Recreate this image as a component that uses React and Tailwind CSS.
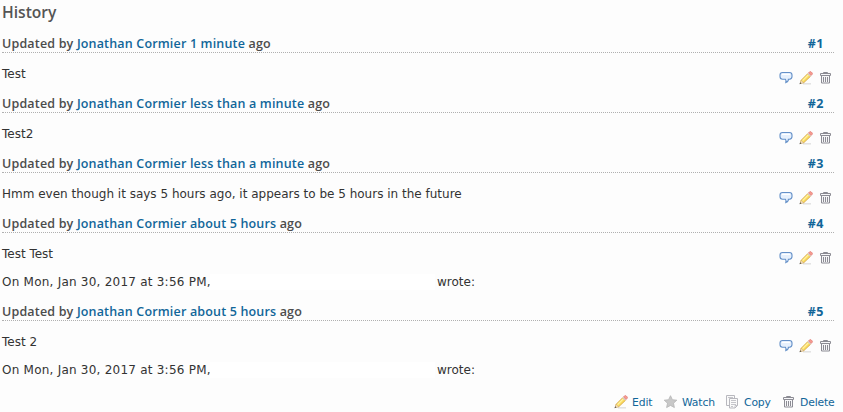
const link = "text-[#116699]";

function BubbleIcon() {
  return (
    <svg width="16" height="16" viewBox="0 0 16 16" fill="none">
      <path d="M4.500 2.500h7c1.800 0 2.500 1.100 2.500 2.500v1.500c0 1.500-.9 2.500-2.500 2.700h-1.100c.1 1.500-.9 2.700-2.600 3.400.4-1.200.2-2.500-.5-3.400H4.500C2.700 9.200 2 8 2 6.500V5c0-1.400.9-2.500 2.500-2.500z" fill="#e6f0fd" stroke="#6490c8" strokeWidth="1.100" />
      <path d="M4 4.500h8" stroke="#fff" />
    </svg>
  );
}

function PencilIcon() {
  return (
    <svg width="16" height="16" viewBox="0 0 16 16" fill="none">
      <path d="M5 13.800h8" stroke="#e2e2e2" strokeWidth="1.500" />
      <path d="M2.300 13.400l.9-3.200 6.500-6.500 2.700 2.700-6.500 6.200z" fill="#fbdc60" stroke="#d2a03c" strokeWidth=".8" />
      <path d="M4.600 10.600l5.700-5.700" stroke="#fff4a8" strokeWidth="1.200" />
      <path d="M3 10.400l2.500 2.300-3.100.8z" fill="#f5e4c8" stroke="#c9a67a" strokeWidth=".4" />
      <path d="M1.500 14.200l.6-1.900 1.300 1.300z" fill="#555" />
      <path d="M9.500 3.800l2.700 2.700.9-.9L10.400 3z" fill="#d5d5dc" />
      <path d="M10.500 2.900l1-1c.6-.5 1.300-.4 1.800.1l.8.800c.5.500.5 1.200 0 1.700l-.9 1z" fill="#f59a90" stroke="#dc6e68" strokeWidth=".6" />
    </svg>
  );
}

function TrashIcon() {
  return (
    <svg width="16" height="16" viewBox="0 0 16 16" fill="none" stroke="#8c8c94">
      <path d="M5.500 3.500v-1h4v1M2.500 3.500h10v2h-10zM3.500 5.500v7.500h8V5.500" fill="#f7f7f9" />
      <path d="M5.500 7v5M7.500 7v5M9.500 7v5" />
    </svg>
  );
}

function StarIcon() {
  return (
    <svg width="16" height="16" viewBox="0 0 16 16">
      <path d="M7.500 1.700l1.900 4 4.400.5-3.300 3 .9 4.400-3.900-2.200-3.900 2.200.9-4.400-3.300-3 4.400-.5z" fill="#c8c8c8" stroke="#b5b5b5" strokeWidth=".8" strokeLinejoin="round" />
    </svg>
  );
}

function CopyIcon() {
  return (
    <svg width="16" height="16" viewBox="0 0 16 16" fill="#fafafa" stroke="#b8b8be">
      <path d="M1.500 1.500h8v10h-8z" />
      <path d="M4.500 4.500h8v7l-2.500 2.500h-5.500z" />
      <path d="M6 6.500h5M6 8.500h5M6 10.500h5M6 12.500h2M3 3.500h5M10 14v-2.500h2.500" fill="none" strokeWidth=".8" />
    </svg>
  );
}

const entries = [
  { when: "1 minute", text: "Test" },
  { when: "less than a minute", text: "Test2" },
  { when: "less than a minute", text: "Hmm even though it says 5 hours ago, it appears to be 5 hours in the future" },
  { when: "about 5 hours", text: "Test Test", quote: true },
  { when: "about 5 hours", text: "Test 2", quote: true },
];

function Entry({ entry, number }) {
  return (
    <article className={entry.quote ? "h-[88px]" : "h-[60px]"}>
      <h4 className="flex h-[17px] justify-between border-b border-dotted border-[#b0b0b0] pr-[10px] font-['Open_Sans',sans-serif] text-[12.5px] leading-4 font-semibold tracking-[0.17px] text-[#4c4c4c]">
        <span>
          Updated by <span className={link}>Jonathan Cormier</span> <span className={link}>{entry.when}</span> ago
        </span>
        <span className={`font-bold tracking-[0.5px] ${link}`}>#{number}</span>
      </h4>
      <div className="flex justify-between pt-[13px]">
        <div className="leading-4">
          <p>{entry.text}</p>
          {entry.quote && (
            <p className="mt-3 flex">
              <span className="w-[208px] whitespace-nowrap tracking-[0.23px]">On Mon, Jan 30, 2017 at 3:56 PM,</span>
              <span className="mr-[2px] h-4 w-[225px] bg-white" />
              <span>wrote:</span>
            </p>
          )}
        </div>
        <div className="flex gap-1 pt-1">
          <BubbleIcon />
          <PencilIcon />
          <TrashIcon />
        </div>
      </div>
    </article>
  );
}

const actions = [
  { label: "Edit", Icon: PencilIcon, width: "w-[50px]" },
  { label: "Watch", Icon: StarIcon, width: "w-[62px]" },
  { label: "Copy", Icon: CopyIcon, width: "w-[56px]" },
  { label: "Delete", Icon: TrashIcon, width: "w-[53px]" },
];

export default function App() {
  return (
    <main className="h-[412px] w-full overflow-hidden bg-[#fdfdfd] pr-[9px] pl-[2px] font-['DejaVu_Sans',sans-serif] text-[12px] text-[#333333]">
      <h3 className="h-9 pt-[2px] font-['Open_Sans',sans-serif] text-[15.6px] leading-5 font-semibold text-[#555555]">History</h3>
      {entries.map((entry, i) => (
        <Entry key={i} entry={entry} number={i + 1} />
      ))}
      <div className="mt-[2px] flex justify-end text-[10.8px] leading-4 tracking-[-0.15px]">
        {actions.map(({ label, Icon, width }) => (
          <a key={label} className={`flex shrink-0 gap-[3px] whitespace-nowrap ${width} ${link}`}>
            <span className="shrink-0"><Icon /></span>
            <span className="pt-px">{label}</span>
          </a>
        ))}
      </div>
    </main>
  );
}
